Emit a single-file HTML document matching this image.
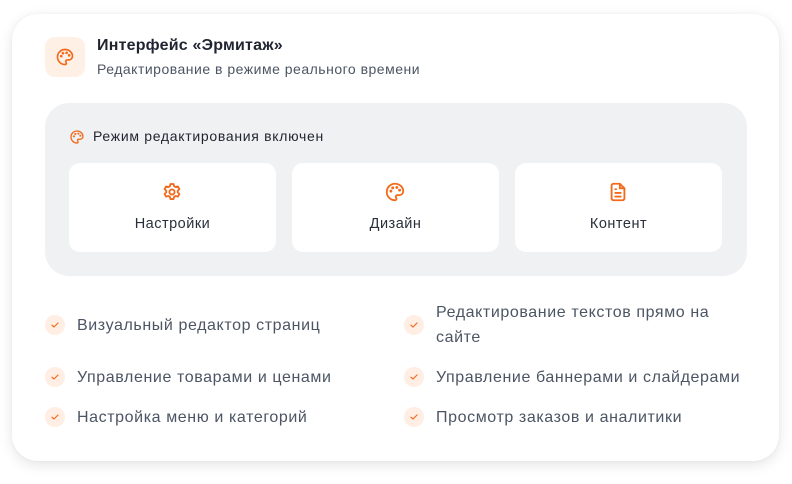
<!DOCTYPE html>
<html><head><meta charset="utf-8"><style>
*{margin:0;padding:0;box-sizing:border-box}
body{width:792px;height:484px;background:#fff;font-family:"Liberation Sans",sans-serif;position:relative;overflow:hidden}
.card{position:absolute;left:12px;top:14px;width:767px;height:447px;background:#fff;border-radius:26px;box-shadow:0 4px 14px rgba(0,0,0,.10),0 0 4px rgba(0,0,0,.04)}
.a{position:absolute;white-space:nowrap}
.ib{left:45px;top:37px;width:40px;height:40px;border-radius:10px;background:#fff0e6;display:flex;align-items:center;justify-content:center}
.t1{left:97px;top:37px;font-size:16px;font-weight:bold;color:#1f2430;letter-spacing:.2px}
.t2{left:97px;top:61px;font-size:14px;color:#4b5563;letter-spacing:.5px}
.panel{left:45px;top:103px;width:702px;height:173px;border-radius:24px;background:#f0f1f3}
.lbl{left:93px;top:128px;font-size:14px;color:#1f2430;letter-spacing:.7px}
.tile{top:163px;width:207px;height:89px;background:#fff;border-radius:11px}
.tile svg{position:absolute;left:92px;top:18px}
.tile span{position:absolute;left:0;right:0;top:53px;text-align:center;font-size:14.5px;color:#2a2f3a;letter-spacing:.5px}
.ck{width:20px;height:20px;border-radius:50%;background:#ffeee4;display:flex;align-items:center;justify-content:center}
.tx{font-size:16px;color:#4b5563;line-height:25px;letter-spacing:.6px}
</style></head><body>
<div class="card"></div>
<div class="a ib"><svg width="20" height="20" viewBox="0 0 24 24" fill="none" stroke="#f26a1b" stroke-width="2" stroke-linecap="round" stroke-linejoin="round"><path d="M12 3a9 9 0 1 0 0 18c1 0 1.6-.8 1.6-1.7 0-.4-.2-.8-.4-1.1-.3-.3-.4-.6-.4-1.1 0-.9.8-1.6 1.7-1.6H16.5A4.5 4.5 0 0 0 21 11c0-4.4-4-8-9-8z"/><circle cx="7.5" cy="11" r=".6" fill="#f26a1b"/><circle cx="9.5" cy="7.5" r=".6" fill="#f26a1b"/><circle cx="14" cy="7" r=".6" fill="#f26a1b"/><circle cx="17" cy="10" r=".6" fill="#f26a1b"/></svg></div>
<div class="a t1">Интерфейс «Эрмитаж»</div>
<div class="a t2">Редактирование в режиме реального времени</div>
<div class="a panel"></div>
<svg class="a" style="left:69px;top:129px" width="16" height="16" viewBox="0 0 24 24" fill="none" stroke="#f26a1b" stroke-width="2" stroke-linecap="round" stroke-linejoin="round"><path d="M12 3a9 9 0 1 0 0 18c1 0 1.6-.8 1.6-1.7 0-.4-.2-.8-.4-1.1-.3-.3-.4-.6-.4-1.1 0-.9.8-1.6 1.7-1.6H16.5A4.5 4.5 0 0 0 21 11c0-4.4-4-8-9-8z"/><circle cx="7.5" cy="11" r=".6" fill="#f26a1b"/><circle cx="9.5" cy="7.5" r=".6" fill="#f26a1b"/><circle cx="14" cy="7" r=".6" fill="#f26a1b"/><circle cx="17" cy="10" r=".6" fill="#f26a1b"/></svg>
<div class="a lbl">Режим редактирования включен</div>
<div class="a tile" style="left:69px"><svg width="22" height="22" viewBox="0 0 24 24" fill="none" stroke="#f26a1b" stroke-width="2" stroke-linejoin="round"><path d="M10.3 3.3h3.4l.6 2.4 1.8 1 2.3-.8 1.7 2.9-1.8 1.7v2l1.8 1.7-1.7 2.9-2.3-.8-1.8 1-.6 2.4h-3.4l-.6-2.4-1.8-1-2.3.8-1.7-2.9 1.8-1.7v-2L3.9 8.8l1.7-2.9 2.3.8 1.8-1z"/><circle cx="12" cy="12" r="2.8"/></svg><span>Настройки</span></div>
<div class="a tile" style="left:292px"><svg width="22" height="22" viewBox="0 0 24 24" fill="none" stroke="#f26a1b" stroke-width="2" stroke-linecap="round" stroke-linejoin="round"><path d="M12 3a9 9 0 1 0 0 18c1 0 1.6-.8 1.6-1.7 0-.4-.2-.8-.4-1.1-.3-.3-.4-.6-.4-1.1 0-.9.8-1.6 1.7-1.6H16.5A4.5 4.5 0 0 0 21 11c0-4.4-4-8-9-8z"/><circle cx="7.5" cy="11" r=".6" fill="#f26a1b"/><circle cx="9.5" cy="7.5" r=".6" fill="#f26a1b"/><circle cx="14" cy="7" r=".6" fill="#f26a1b"/><circle cx="17" cy="10" r=".6" fill="#f26a1b"/></svg><span>Дизайн</span></div>
<div class="a tile" style="left:515px"><svg width="22" height="22" viewBox="0 0 24 24" fill="none" stroke="#f26a1b" stroke-width="2" stroke-linecap="round" stroke-linejoin="round"><path d="M14 3H7a2 2 0 0 0-2 2v14a2 2 0 0 0 2 2h10a2 2 0 0 0 2-2V8z"/><path d="M14 3v5h5M9 13h6M9 17h6M9 9h1"/></svg><span>Контент</span></div>

<div class="a ck" style="left:45px;top:315px"><svg width="10" height="10" viewBox="0 0 10 10"><path d="M2 5.2l2 1.8 4-4" fill="none" stroke="#f26a1b" stroke-width="1.2" stroke-linecap="round" stroke-linejoin="round"/></svg></div>
<div class="a tx" style="left:77px;top:313px">Визуальный редактор страниц</div>
<div class="a ck" style="left:45px;top:367px"><svg width="10" height="10" viewBox="0 0 10 10"><path d="M2 5.2l2 1.8 4-4" fill="none" stroke="#f26a1b" stroke-width="1.2" stroke-linecap="round" stroke-linejoin="round"/></svg></div>
<div class="a tx" style="left:77px;top:365px">Управление товарами и ценами</div>
<div class="a ck" style="left:45px;top:407px"><svg width="10" height="10" viewBox="0 0 10 10"><path d="M2 5.2l2 1.8 4-4" fill="none" stroke="#f26a1b" stroke-width="1.2" stroke-linecap="round" stroke-linejoin="round"/></svg></div>
<div class="a tx" style="left:77px;top:405px">Настройка меню и категорий</div>

<div class="a ck" style="left:404px;top:315px"><svg width="10" height="10" viewBox="0 0 10 10"><path d="M2 5.2l2 1.8 4-4" fill="none" stroke="#f26a1b" stroke-width="1.2" stroke-linecap="round" stroke-linejoin="round"/></svg></div>
<div class="a tx" style="left:436px;top:300px;white-space:normal;width:300px">Редактирование текстов прямо на<br>сайте</div>
<div class="a ck" style="left:404px;top:367px"><svg width="10" height="10" viewBox="0 0 10 10"><path d="M2 5.2l2 1.8 4-4" fill="none" stroke="#f26a1b" stroke-width="1.2" stroke-linecap="round" stroke-linejoin="round"/></svg></div>
<div class="a tx" style="left:436px;top:365px">Управление баннерами и слайдерами</div>
<div class="a ck" style="left:404px;top:407px"><svg width="10" height="10" viewBox="0 0 10 10"><path d="M2 5.2l2 1.8 4-4" fill="none" stroke="#f26a1b" stroke-width="1.2" stroke-linecap="round" stroke-linejoin="round"/></svg></div>
<div class="a tx" style="left:436px;top:405px">Просмотр заказов и аналитики</div>
</body></html>
